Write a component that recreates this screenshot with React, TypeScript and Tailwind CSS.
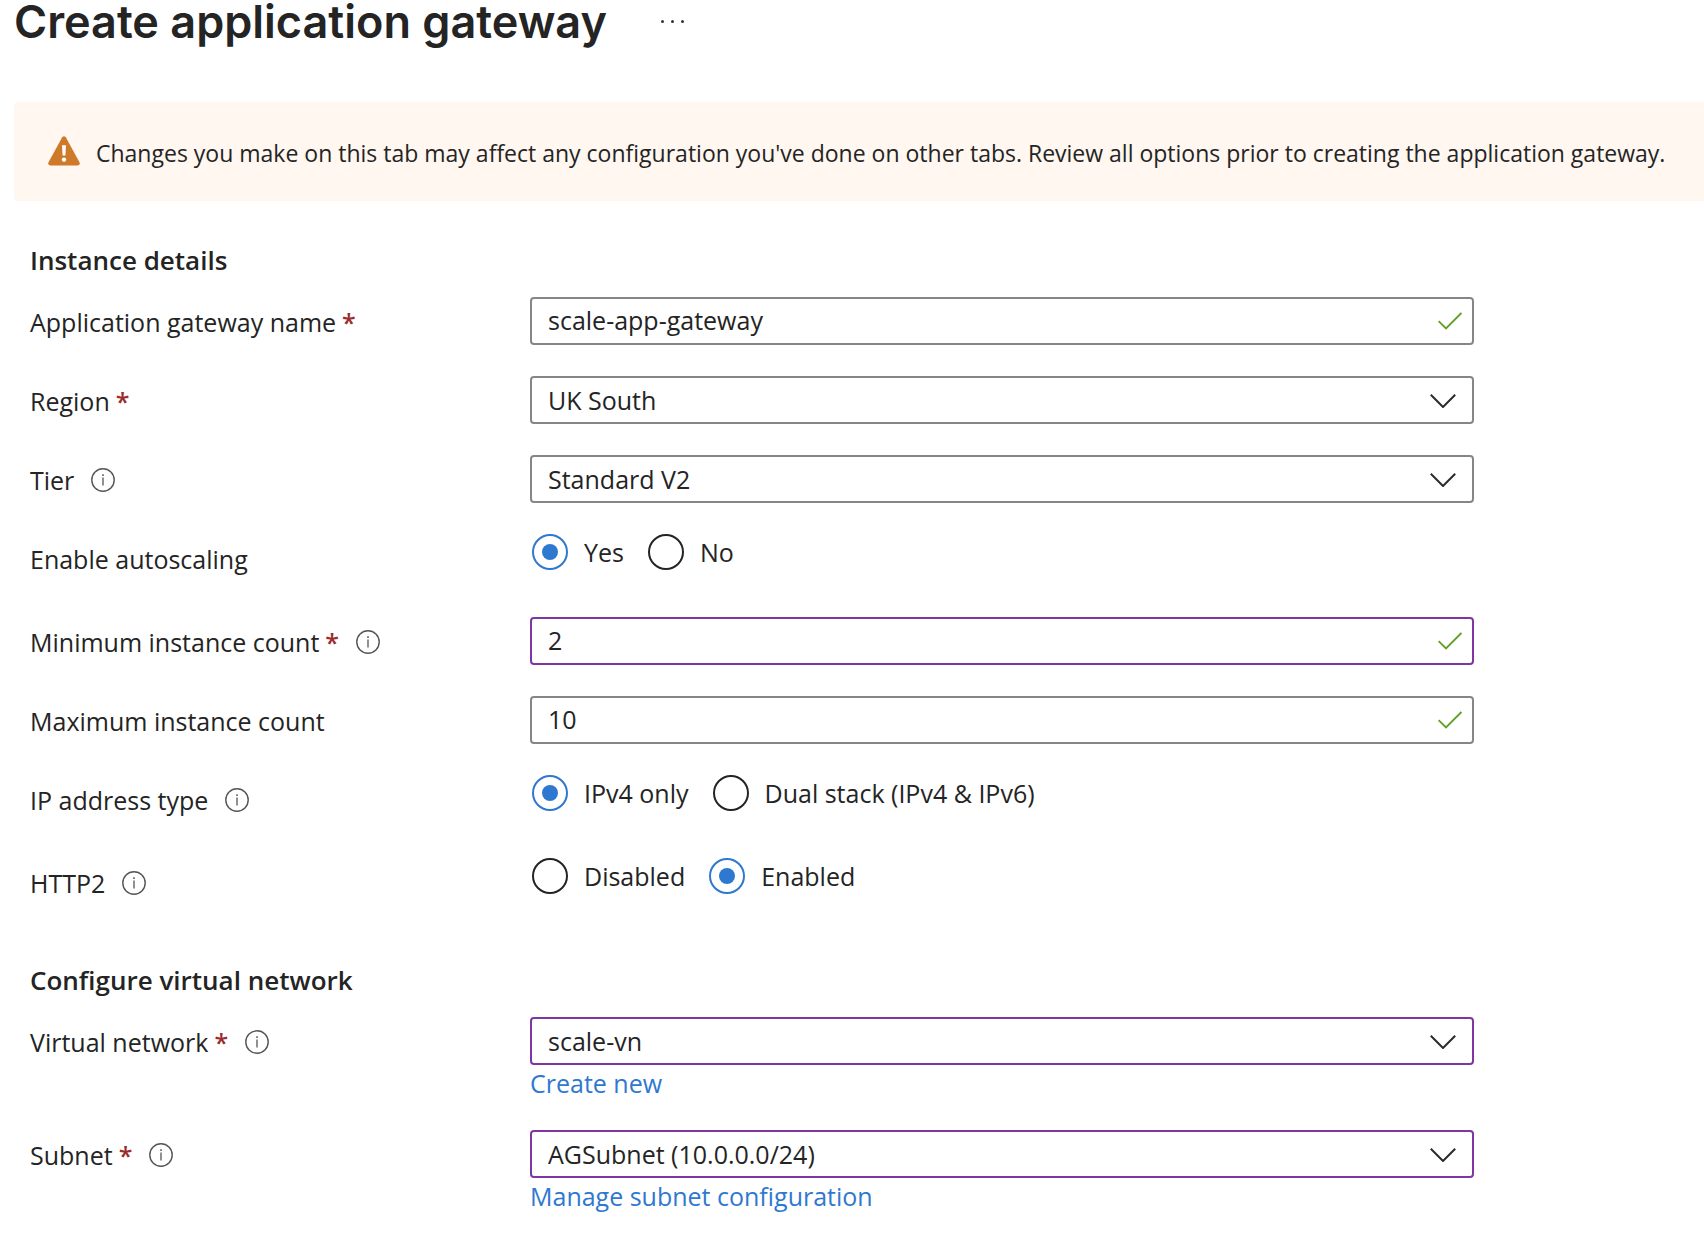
import type { ReactNode } from "react";

const fieldBase =
  "block h-12 w-full appearance-none rounded border-2 bg-white pl-4 pr-16 text-[25px] text-[#242424] outline-none";

function InfoIcon() {
  return (
    <svg viewBox="0 0 24 24" className="size-6 shrink-0" fill="none" stroke="#555" aria-hidden="true">
      <circle cx="12" cy="12" r="11.2" strokeWidth="1.4" />
      <path d="M12 9.5V17.5" strokeWidth="1.3" />
      <path d="M12 6.3V8" strokeWidth="1.5" />
    </svg>
  );
}

function CheckIcon() {
  return (
    <svg
      viewBox="0 0 24 18"
      className="pointer-events-none absolute top-[15px] right-[12px] h-[18px] w-6"
      fill="none"
      stroke="#5f9f22"
      strokeWidth="1.8"
      aria-hidden="true"
    >
      <path d="M0.6 9.2L8 16.4L23.4 1" />
    </svg>
  );
}

function ChevronIcon() {
  return (
    <svg
      viewBox="0 0 26 14"
      className="pointer-events-none absolute top-[18px] right-[18px] h-[14px] w-[26px]"
      fill="none"
      stroke="#2b2b2b"
      strokeWidth="2"
      aria-hidden="true"
    >
      <path d="M0.8 0.8L13 13L25.2 0.8" />
    </svg>
  );
}

type RowProps = {
  label: string;
  htmlFor?: string;
  id?: string;
  required?: boolean;
  info?: boolean;
  children: ReactNode;
};

function Row({ label, htmlFor, id, required, info, children }: RowProps) {
  return (
    <div className="grid grid-cols-[minmax(0,500px)_minmax(0,944px)] items-start">
      <div className="flex items-center pt-2">
        {htmlFor ? (
          <label htmlFor={htmlFor} className="leading-[34px]">
            {label}
          </label>
        ) : (
          <span id={id} className="leading-[34px]">
            {label}
          </span>
        )}
        {required && <span className="ml-1.5 leading-8 font-semibold text-[#9b2c2c]">*</span>}
        {info && (
          <button type="button" aria-label={`About ${label}`} className="ml-[17px]">
            <InfoIcon />
          </button>
        )}
      </div>
      <div>{children}</div>
    </div>
  );
}

function TextField({ id, value, changed }: { id: string; value: string; changed?: boolean }) {
  return (
    <div className="relative">
      <input
        id={id}
        type="text"
        defaultValue={value}
        className={`${fieldBase} pb-0.5 ${changed ? "border-[#7f35a3]" : "border-[#868686]"}`}
      />
      <CheckIcon />
    </div>
  );
}

function SelectField({ id, value, changed }: { id: string; value: string; changed?: boolean }) {
  return (
    <div className="relative">
      <select
        id={id}
        defaultValue={value}
        className={`${fieldBase} pt-0.5 ${changed ? "border-[#7f35a3]" : "border-[#868686]"}`}
      >
        <option>{value}</option>
      </select>
      <ChevronIcon />
    </div>
  );
}

function RadioGroup({
  name,
  labelledBy,
  options,
  selected,
}: {
  name: string;
  labelledBy: string;
  options: string[];
  selected: string;
}) {
  return (
    <div role="radiogroup" aria-labelledby={labelledBy} className="flex h-[52px] items-start gap-6 pl-[2px]">
      {options.map((option) => (
        <label key={option} className="flex h-9 items-center gap-4">
          <input
            type="radio"
            name={name}
            defaultChecked={option === selected}
            className="grid size-9 shrink-0 appearance-none place-content-center rounded-full border-2 border-[#242424] before:size-4 before:rounded-full checked:border-[#2f78d0] checked:before:bg-[#2f78d0]"
          />
          <span className="pt-0.5">{option}</span>
        </label>
      ))}
    </div>
  );
}

export default function App() {
  return (
    <main className="min-h-screen bg-white pl-[14px] font-['Open_Sans','Noto_Sans',sans-serif] text-[25px] text-[#242424]">
      <header className="flex h-[102px] items-start">
        <h1 className="font-['Inter',sans-serif] text-[45px] leading-[43px] font-semibold">
          Create application gateway
        </h1>
        <button type="button" aria-label="More actions" className="mt-[20px] ml-[54px] flex gap-[7px]">
          <span className="size-[3px] rounded-full bg-[#333]" />
          <span className="size-[3px] rounded-full bg-[#333]" />
          <span className="size-[3px] rounded-full bg-[#333]" />
        </button>
      </header>

      <div role="status" className="flex items-center rounded-l bg-[#fff7f0] pt-[34px] pb-[30px] pl-[34px]">
        <svg viewBox="0 0 32 30" className="-mt-1.5 h-[30px] w-8 shrink-0" aria-hidden="true">
          <path
            d="M14.2 1.3Q16 -1 17.8 1.3L31.6 26.4Q32.4 29.6 29.4 29.6H2.6Q-0.4 29.6 0.4 26.4Z"
            fill="#cf7a2b"
          />
          <path d="M14 9.3H18L17.4 19.4H14.6Z" fill="#fff" />
          <circle cx="16" cy="23.6" r="2.2" fill="#fff" />
        </svg>
        <p className="ml-4 text-[23px] leading-[35px]">
          Changes you make on this tab may affect any configuration you've done on other tabs. Review all options
          prior to creating the application gateway.
        </p>
      </div>

      <form className="pt-[41px] pr-4 pb-8 pl-4">
        <section>
          <h2 className="text-[26px] leading-9 font-semibold">Instance details</h2>
          <div className="mt-[19px] flex flex-col gap-[31px]">
            <Row label="Application gateway name" htmlFor="name" required>
              <TextField id="name" value="scale-app-gateway" />
            </Row>
            <Row label="Region" htmlFor="region" required>
              <SelectField id="region" value="UK South" />
            </Row>
            <Row label="Tier" htmlFor="tier" info>
              <SelectField id="tier" value="Standard V2" />
            </Row>
            <Row label="Enable autoscaling" id="autoscaling">
              <RadioGroup name="autoscaling" labelledBy="autoscaling" options={["Yes", "No"]} selected="Yes" />
            </Row>
            <Row label="Minimum instance count" htmlFor="min" required info>
              <TextField id="min" value="2" changed />
            </Row>
            <Row label="Maximum instance count" htmlFor="max">
              <TextField id="max" value="10" />
            </Row>
            <Row label="IP address type" id="ip" info>
              <RadioGroup
                name="ip"
                labelledBy="ip"
                options={["IPv4 only", "Dual stack (IPv4 & IPv6)"]}
                selected="IPv4 only"
              />
            </Row>
            <Row label="HTTP2" id="http2" info>
              <RadioGroup name="http2" labelledBy="http2" options={["Disabled", "Enabled"]} selected="Enabled" />
            </Row>
          </div>
        </section>

        <section className="pt-[52px]">
          <h2 className="text-[26px] leading-9 font-semibold">Configure virtual network</h2>
          <div className="mt-[19px] flex flex-col gap-[31px]">
            <Row label="Virtual network" htmlFor="vnet" required info>
              <SelectField id="vnet" value="scale-vn" changed />
              <a href="#create" className="block w-fit pt-0.5 leading-8 text-[#2f78d0]">
                Create new
              </a>
            </Row>
            <Row label="Subnet" htmlFor="subnet" required info>
              <SelectField id="subnet" value="AGSubnet (10.0.0.0/24)" changed />
              <a href="#subnets" className="block w-fit pt-0.5 leading-8 text-[#2f78d0]">
                Manage subnet configuration
              </a>
            </Row>
          </div>
        </section>
      </form>
    </main>
  );
}
